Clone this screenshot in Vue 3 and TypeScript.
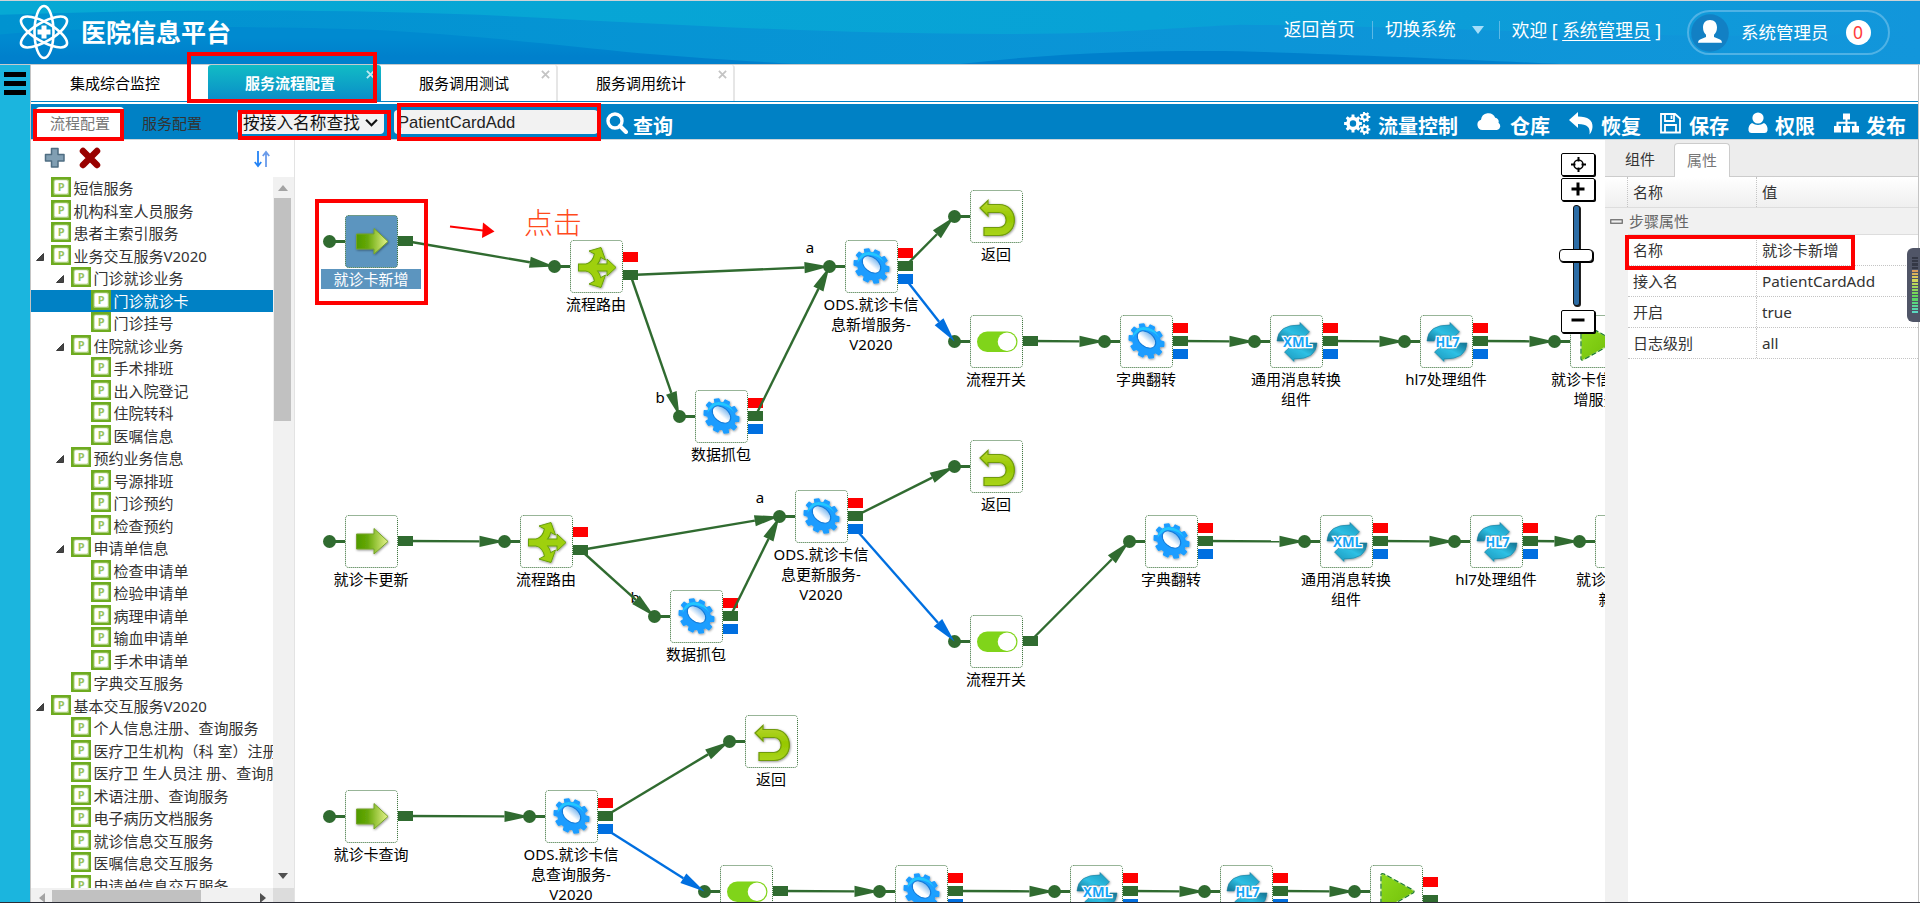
<script setup lang="ts">
type Kind = 'start' | 'router' | 'gear' | 'back' | 'toggle' | 'xml' | 'hl7' | 'play'
interface FlowNode { id: string; kind: Kind; x: number; y: number; lines: string[]; selected?: boolean }
interface Port { dy: number; color: string }
interface Edge { from: string; port: number; to: string; color?: string }
interface TreeRow { text: string; level: number; open?: boolean; selected?: boolean }

const GREEN = '#306b30'
const RED = '#fe0000'
const BLUE = '#006fe0'

const navTabs = [
  { text: '集成综合监控', cls: 'home', closable: false },
  { text: '服务流程配置', cls: 'active', closable: true },
  { text: '服务调用测试', cls: '', closable: true },
  { text: '服务调用统计', cls: '', closable: true },
]

const actions = [
  { icon: 'gears', text: '流量控制' },
  { icon: 'cloud', text: '仓库' },
  { icon: 'undo', text: '恢复' },
  { icon: 'save', text: '保存' },
  { icon: 'user', text: '权限' },
  { icon: 'sitemap', text: '发布' },
]

const tree: TreeRow[] = [
  { text: '短信服务', level: 0 },
  { text: '机构科室人员服务', level: 0 },
  { text: '患者主索引服务', level: 0 },
  { text: '业务交互服务V2020', level: 0, open: true },
  { text: '门诊就诊业务', level: 1, open: true },
  { text: '门诊就诊卡', level: 2, selected: true },
  { text: '门诊挂号', level: 2 },
  { text: '住院就诊业务', level: 1, open: true },
  { text: '手术排班', level: 2 },
  { text: '出入院登记', level: 2 },
  { text: '住院转科', level: 2 },
  { text: '医嘱信息', level: 2 },
  { text: '预约业务信息', level: 1, open: true },
  { text: '号源排班', level: 2 },
  { text: '门诊预约', level: 2 },
  { text: '检查预约', level: 2 },
  { text: '申请单信息', level: 1, open: true },
  { text: '检查申请单', level: 2 },
  { text: '检验申请单', level: 2 },
  { text: '病理申请单', level: 2 },
  { text: '输血申请单', level: 2 },
  { text: '手术申请单', level: 2 },
  { text: '字典交互服务', level: 1 },
  { text: '基本交互服务V2020', level: 0, open: true },
  { text: '个人信息注册、查询服务', level: 1 },
  { text: '医疗卫生机构（科 室）注册、查询服务', level: 1 },
  { text: '医疗卫 生人员注 册、查询服务', level: 1 },
  { text: '术语注册、查询服务', level: 1 },
  { text: '电子病历文档服务', level: 1 },
  { text: '就诊信息交互服务', level: 1 },
  { text: '医嘱信息交互服务', level: 1 },
  { text: '申请单信息交互服务', level: 1 },
]

const nodes: FlowNode[] = [
  { id: 'a1', kind: 'start', x: 345, y: 215, lines: ['就诊卡新增'], selected: true },
  { id: 'a2', kind: 'router', x: 570, y: 240, lines: ['流程路由'] },
  { id: 'a3', kind: 'gear', x: 695, y: 390, lines: ['数据抓包'] },
  { id: 'a4', kind: 'gear', x: 845, y: 240, lines: ['ODS.就诊卡信', '息新增服务-', 'V2020'] },
  { id: 'a5', kind: 'back', x: 970, y: 190, lines: ['返回'] },
  { id: 'a6', kind: 'toggle', x: 970, y: 315, lines: ['流程开关'] },
  { id: 'a7', kind: 'gear', x: 1120, y: 315, lines: ['字典翻转'] },
  { id: 'a8', kind: 'xml', x: 1270, y: 315, lines: ['通用消息转换', '组件'] },
  { id: 'a9', kind: 'hl7', x: 1420, y: 315, lines: ['hl7处理组件'] },
  { id: 'a10', kind: 'play', x: 1570, y: 315, lines: ['就诊卡信息新', '增服务'] },
  { id: 'b1', kind: 'start', x: 345, y: 515, lines: ['就诊卡更新'] },
  { id: 'b2', kind: 'router', x: 520, y: 515, lines: ['流程路由'] },
  { id: 'b3', kind: 'gear', x: 670, y: 590, lines: ['数据抓包'] },
  { id: 'b4', kind: 'gear', x: 795, y: 490, lines: ['ODS.就诊卡信', '息更新服务-', 'V2020'] },
  { id: 'b5', kind: 'back', x: 970, y: 440, lines: ['返回'] },
  { id: 'b6', kind: 'toggle', x: 970, y: 615, lines: ['流程开关'] },
  { id: 'b7', kind: 'gear', x: 1145, y: 515, lines: ['字典翻转'] },
  { id: 'b8', kind: 'xml', x: 1320, y: 515, lines: ['通用消息转换', '组件'] },
  { id: 'b9', kind: 'hl7', x: 1470, y: 515, lines: ['hl7处理组件'] },
  { id: 'b10', kind: 'play', x: 1595, y: 515, lines: ['就诊卡信息更', '新服务'] },
  { id: 'c1', kind: 'start', x: 345, y: 790, lines: ['就诊卡查询'] },
  { id: 'c2', kind: 'gear', x: 545, y: 790, lines: ['ODS.就诊卡信', '息查询服务-', 'V2020'] },
  { id: 'c3', kind: 'back', x: 745, y: 715, lines: ['返回'] },
  { id: 'c4', kind: 'toggle', x: 720, y: 865, lines: [] },
  { id: 'c5', kind: 'gear', x: 895, y: 865, lines: [] },
  { id: 'c6', kind: 'xml', x: 1070, y: 865, lines: [] },
  { id: 'c7', kind: 'hl7', x: 1220, y: 865, lines: [] },
  { id: 'c8', kind: 'play', x: 1370, y: 865, lines: [] },
]

const edges: Edge[] = [
  { from: 'a1', port: 0, to: 'a2' },
  { from: 'a2', port: 1, to: 'a4' },
  { from: 'a2', port: 1, to: 'a3' },
  { from: 'a3', port: 1, to: 'a4' },
  { from: 'a4', port: 1, to: 'a5' },
  { from: 'a4', port: 2, to: 'a6', color: BLUE },
  { from: 'a6', port: 0, to: 'a7' },
  { from: 'a7', port: 1, to: 'a8' },
  { from: 'a8', port: 1, to: 'a9' },
  { from: 'a9', port: 1, to: 'a10' },
  { from: 'b1', port: 0, to: 'b2' },
  { from: 'b2', port: 1, to: 'b4' },
  { from: 'b2', port: 1, to: 'b3' },
  { from: 'b3', port: 1, to: 'b4' },
  { from: 'b4', port: 1, to: 'b5' },
  { from: 'b4', port: 2, to: 'b6', color: BLUE },
  { from: 'b6', port: 0, to: 'b7' },
  { from: 'b7', port: 1, to: 'b8' },
  { from: 'b8', port: 1, to: 'b9' },
  { from: 'b9', port: 1, to: 'b10' },
  { from: 'c1', port: 0, to: 'c2' },
  { from: 'c2', port: 1, to: 'c3' },
  { from: 'c2', port: 2, to: 'c4', color: BLUE },
  { from: 'c4', port: 0, to: 'c5' },
  { from: 'c5', port: 1, to: 'c6' },
  { from: 'c6', port: 1, to: 'c7' },
  { from: 'c7', port: 1, to: 'c8' },
]

const edgeLabels = [
  { t: 'a', x: 810, y: 253 },
  { t: 'b', x: 660, y: 403 },
  { t: 'a', x: 760, y: 503 },
  { t: 'b', x: 635, y: 603 },
]

const props = [
  { k: '名称', v: '就诊卡新增' },
  { k: '接入名', v: 'PatientCardAdd' },
  { k: '开启', v: 'true' },
  { k: '日志级别', v: 'all' },
]

function ports(kind: Kind): Port[] {
  if (kind === 'back') return []
  if (kind === 'start' || kind === 'toggle') return [{ dy: 21, color: GREEN }]
  if (kind === 'router' || kind === 'play') return [{ dy: 12, color: RED }, { dy: 30, color: GREEN }]
  return [{ dy: 8, color: RED }, { dy: 21, color: GREEN }, { dy: 34, color: BLUE }]
}

const wires = edges.map((e) => {
  const a = nodes.find((n) => n.id === e.from)!
  const b = nodes.find((n) => n.id === e.to)!
  const x1 = a.x + 60.5
  const y1 = a.y + ports(a.kind)[e.port].dy + 5
  const x2 = b.x - 15.5
  const y2 = b.y + 26.5
  const len = Math.hypot(x2 - x1, y2 - y1)
  const ux = (x2 - x1) / len
  const uy = (y2 - y1) / len
  const bx = x2 - ux * 25
  const by = y2 - uy * 25
  const head = `${x2},${y2} ${bx - uy * 5.6},${by + ux * 5.6} ${bx + uy * 5.6},${by - ux * 5.6}`
  return { x1, y1, x2: bx, y2: by, head, color: e.color ?? GREEN }
})

/* Cog outline: teeth alternate between an inner and an outer radius. */
function cog(cx: number, cy: number, outer: number, inner: number, teeth: number): string {
  const pts: string[] = []
  const step = (Math.PI * 2) / teeth
  for (let i = 0; i < teeth; i++) {
    const a = i * step
    const corners: [number, number][] = [[-0.3, inner], [-0.2, outer], [0.2, outer], [0.3, inner]]
    for (const [f, r] of corners) {
      pts.push(`${(cx + Math.cos(a + f * step) * r).toFixed(2)},${(cy + Math.sin(a + f * step) * r).toFixed(2)}`)
    }
  }
  return `M${pts.join('L')}Z`
}
function hole(cx: number, cy: number, r: number): string {
  return `M${cx - r},${cy}a${r},${r} 0 1 0 ${2 * r},0a${r},${r} 0 1 0 ${-2 * r},0Z`
}
const bigCog = cog(0, 0, 17, 13.6, 10)
const gears = cog(9, 11.5, 9, 6.8, 8) + hole(9, 11.5, 3.2) + cog(21, 5, 5.4, 4, 7) + hole(21, 5, 1.7) + cog(21, 17.5, 5.4, 4, 7) + hole(21, 17.5, 1.7)
const meter = Array.from({ length: 18 }, (_, i) => {
  if (i < 4) return '#343846'
  const hue = 32 + (i - 4) * 10.5
  return `hsl(${hue}, 62%, 60%)`
})
</script>

<template>
  <div class="page">
    <header class="top">
      <svg class="waves" viewBox="0 0 1920 64" preserveAspectRatio="none">
        <defs>
          <linearGradient id="w0" x1="0" x2="1" y1="0" y2="0">
            <stop offset="0" stop-color="#0093d0" /><stop offset="1" stop-color="#1296db" />
          </linearGradient>
          <linearGradient id="w1" x1="0" x2="1" y1="0" y2="0">
            <stop offset="0" stop-color="#06a9d4" /><stop offset=".6" stop-color="#08a2d6" /><stop offset="1" stop-color="#1296db" />
          </linearGradient>
          <linearGradient id="w2" x1="0" x2="0" y1="0" y2="1">
            <stop offset="0.300" stop-color="#008ad0" /><stop offset=".8" stop-color="#0080cc" />
          </linearGradient>
        </defs>
        <rect width="1920" height="64" fill="url(#w0)" />
        <path d="M0,14 C180,8 360,8 520,16 C700,26 900,36 1060,33 C1140,31 1190,26 1240,24 C1500,26 1700,44 1920,30 V0H0Z" fill="url(#w1)" />
        <path d="M0,34 C100,25 250,25 367,29 C480,35 560,45 640,53 C700,58 760,62 800,64 H0Z" fill="url(#w2)" />
        <path d="M960,64 C1060,52 1160,50 1240,51 C1340,54 1480,60 1560,64Z" fill="#0080cc" />
      </svg>
      <svg class="logo" viewBox="0 0 52 56">
        <g fill="none" stroke="#fff" stroke-width="2.6">
          <ellipse cx="26" cy="28" rx="9.5" ry="26" />
          <ellipse cx="26" cy="28" rx="9.5" ry="26" transform="rotate(60 26 28)" />
          <ellipse cx="26" cy="28" rx="9.5" ry="26" transform="rotate(-60 26 28)" />
        </g>
        <path d="M23.5,21.5h5v4h4v5h-4v4h-5v-4h-4v-5h4z" fill="#fff" />
      </svg>
      <h1>医院信息平台</h1>
      <nav class="links">
        <span class="l1">返回首页</span>
        <i class="sep"></i>
        <span class="l2">切换系统</span>
        <svg class="caret" viewBox="0 0 12 8"><path d="M0,0H12L6,8Z" fill="#a5defa" /></svg>
        <i class="sep s2"></i>
        <span class="hello">欢迎 [ <u>系统管理员</u> ]</span>
      </nav>
      <div class="pill">
        <svg class="avatar" viewBox="0 0 38 38">
          <circle cx="19" cy="19" r="18.8" fill="#1280c4" />
          <path d="M19,6c4.600,0 7,3 7,7.500c0,3.500-1.500,6-3,7.300v2.200l6,2.400q2,1 2,3.400h-24q0-2.400 2-3.400l6-2.400v-2.200c-1.500-1.300-3-3.800-3-7.300c0-4.500 2.400-7.500 7-7.500z" fill="#fff" />
        </svg>
        <span>系统管理员</span>
        <b class="badge">0</b>
      </div>
    </header>

    <div class="body">
      <aside class="rail"><i></i><i></i><i></i></aside>
      <div class="main">
        <div class="tabs">
          <div v-for="t in navTabs" :key="t.text" class="tab" :class="t.cls">
            {{ t.text }}
            <svg v-if="t.closable" class="close" viewBox="0 0 10 10"><path d="M1,1L9,9M9,1L1,9" stroke="currentColor" stroke-width="2" /></svg>
          </div>
        </div>

        <div class="toolbar">
          <span class="sub on">流程配置</span>
          <span class="sub">服务配置</span>
          <div class="select">
            按接入名称查找
            <svg viewBox="0 0 12 8"><path d="M1,1.500L6,6.500L11,1.500" fill="none" stroke="#111" stroke-width="2" /></svg>
          </div>
          <div class="input">PatientCardAdd</div>
          <svg class="find" viewBox="0 0 22 22"><circle cx="9" cy="9" r="7" fill="none" stroke="#fff" stroke-width="3.4" /><path d="M14,14L20,20" stroke="#fff" stroke-width="4" stroke-linecap="round" /></svg>
          <span class="act find-text">查询</span>
          <div class="actions">
            <div v-for="a in actions" :key="a.text" class="action" :class="a.icon">
              <svg v-if="a.icon === 'gears'" width="27" height="23" viewBox="0 0 27 23"><path :d="gears" fill="#fff" fill-rule="evenodd" /></svg>
              <svg v-else-if="a.icon === 'cloud'" width="25" height="23" viewBox="0 0 25 23"><path d="M5.500,18a5.300,5.300 0 0 1-1.500-10.300a7.400,7.400 0 0 1 14.200-1.900a3.800,3.800 0 0 1 3.300,5a4,4 0 0 1-1.500,7.200z" fill="#fff" /></svg>
              <svg v-else-if="a.icon === 'undo'" width="24" height="23" viewBox="0 0 24 23"><path d="M0,8L9,0V4.500C19,4.500 24,8.500 23.500,15C23.300,18 22,20.500 20.500,22.500C21.500,15.500 18.500,12 9,12V16Z" fill="#fff" /></svg>
              <svg v-else-if="a.icon === 'save'" width="21" height="23" viewBox="0 0 21 23"><path d="M1,2H15L20,6.500V20.500H1ZM5,2V9H14V2M11.500,3.500V7M5,20V13H16V20" fill="none" stroke="#fff" stroke-width="1.800" /></svg>
              <svg v-else-if="a.icon === 'user'" width="20" height="23" viewBox="0 0 20 23"><circle cx="10" cy="6" r="5.600" fill="#fff" /><path d="M4,11Q10,15 16,11Q20,13 19.500,18.500Q19,21 16.500,21H3.500Q1,21 .5,18.500Q0,13 4,11Z" fill="#fff" /></svg>
              <svg v-else width="25" height="23" viewBox="0 0 25 23"><path d="M9,1.500h7v6h-7zM0,14h7v6.500h-7zM9,14h7v6.500h-7zM18,14h7v6.500h-7z" fill="#fff" /><path d="M12.500,7V14M3.500,14V10.800H21.500V14" fill="none" stroke="#fff" stroke-width="2" /></svg>
              <span class="act">{{ a.text }}</span>
            </div>
          </div>
        </div>

        <div class="work">
          <section class="side">
            <div class="side-tools">
              <svg width="22" height="22" viewBox="0 0 22 22"><path d="M7.500,1.500h6.500v6h6v6.500h-6v6h-6.500v-6h-6v-6.500h6z" fill="#819fb3" stroke="#4f6e82" stroke-width="1.500" stroke-linejoin="round" /></svg>
              <svg class="del" width="22" height="22" viewBox="0 0 22 22"><path d="M4,4L18,18M18,4L4,18" stroke="#990100" stroke-width="6.500" stroke-linecap="round" /></svg>
              <svg class="sort" width="17" height="18" viewBox="0 0 17 18"><path d="M4,1V15M.8,12L4,16L7.200,12" fill="none" stroke="#2383f5" stroke-width="1.800" /><path d="M12,17V3M8.800,6L12,2L15.200,6" fill="none" stroke="#6a9bea" stroke-width="1.800" /></svg>
            </div>
            <div class="tree-area">
              <div class="tree">
                <div v-for="r in tree" :key="r.text" class="row" :class="['lv' + r.level, { sel: r.selected }]">
                  <span class="toggle"><svg v-if="r.open" width="8" height="8" viewBox="0 0 8 8"><path d="M7.500,.5V7.500H.5Z" fill="#444" stroke="#222" stroke-width=".8" /></svg></span>
                  <svg class="p" viewBox="0 0 20 20">
                    <rect width="20" height="20" fill="#6eab20" />
                    <rect x="2.500" y="2.500" width="15.500" height="15.500" rx="1.500" fill="#a9cd7a" />
                    <rect x="3.500" y="3.300" width="13.300" height="13.500" rx="1.500" fill="#fff" />
                    <text x="10.300" y="13.500" text-anchor="middle" font-size="11" font-weight="700" fill="#97c25f">P</text>
                  </svg>
                  <span class="name">{{ r.text }}</span>
                </div>
              </div>
              <div class="vbar"><svg width="10" height="6" viewBox="0 0 10 6"><path d="M0,6L5,0L10,6Z" fill="#a3a3a3" /></svg><i></i><svg class="dn" width="10" height="6" viewBox="0 0 10 6"><path d="M0,0L5,6L10,0Z" fill="#505050" /></svg></div>
            </div>
            <div class="hbar">
              <svg width="6" height="10" viewBox="0 0 6 10"><path d="M6,0V10L0,5Z" fill="#a3a3a3" /></svg><i></i><svg class="rt" width="6" height="10" viewBox="0 0 6 10"><path d="M0,0V10L6,5Z" fill="#505050" /></svg><b></b>
            </div>
          </section>

          <section class="canvas">
            <svg class="flow" viewBox="295 140 1310 762" width="1310" height="762">
              <defs>
                <linearGradient id="gs" x1="0" x2="1" y1="0" y2="0"><stop offset="0" stop-color="#4f9a00" /><stop offset=".35" stop-color="#66a808" /><stop offset="1" stop-color="#e6f38c" /></linearGradient>
                <linearGradient id="gc" x1="0" x2="1" y1="1" y2="0"><stop offset="0" stop-color="#1b9bff" /><stop offset=".5" stop-color="#1c9dff" /><stop offset="1" stop-color="#1ba4ff" /></linearGradient>
                <linearGradient id="gh" x1="0" x2="0" y1="0" y2="1"><stop offset="0" stop-color="#7fb9ee" /><stop offset=".6" stop-color="#fff" /></linearGradient>
                <linearGradient id="gb" x1="0" x2="0" y1="0" y2="1"><stop offset="0" stop-color="#b7d62e" /><stop offset=".5" stop-color="#96c800" /><stop offset="1" stop-color="#a9d41a" /></linearGradient>
                <linearGradient id="gr" x1="0" x2="1" y1="1" y2="0"><stop offset="0" stop-color="#126f8e" /><stop offset=".45" stop-color="#2ec0e4" /><stop offset="1" stop-color="#1b94b8" /></linearGradient>
                <linearGradient id="gp" x1="0" x2="1" y1="0" y2="1"><stop offset="0" stop-color="#8edb1c" /><stop offset="1" stop-color="#6fbc08" /></linearGradient>
                <filter id="sh" x="-20%" y="-20%" width="150%" height="150%"><feDropShadow dx=".6" dy=".8" stdDeviation="1" flood-opacity=".45" /></filter>
              </defs>
              <g v-for="n in nodes" :key="n.id" :transform="`translate(${n.x} ${n.y})`">
                <path d="M-15,26.500H0" :stroke="GREEN" stroke-width="3" />
                <circle cx="-15.500" cy="26.500" r="6.500" :fill="GREEN" />
                <rect x=".5" y=".5" width="52" height="52" rx="3" :fill="n.selected ? '#5c95bf' : '#fff'" :stroke="GREEN" stroke-width="1" stroke-dasharray="1 1" />
                <rect v-for="p in ports(n.kind)" :key="p.dy" x="53" :y="p.dy" width="15" height="10" :fill="p.color" />

                <path v-if="n.kind === 'start'" d="M11.500,19H29V13.500L43,26.500L29,39V34H11.500Z" fill="url(#gs)" stroke="#76a32c" stroke-width="1" filter="url(#sh)" />
                <g v-else-if="n.kind === 'router'" filter="url(#sh)">
                  <g fill="none" stroke="#689f08" stroke-width="8"><path d="M8,27.500H38" /><path d="M17,27.500Q26,25 28,14M17,27.500Q26,30 28,41" /></g>
                  <g fill="#9fd010" stroke="#689f08" stroke-width="1"><path d="M37,19L46,27.500L37,36Z" /><path d="M19,11L31,7.500L35.500,20Z" /><path d="M19,44L31,47.500L35.500,35Z" /></g>
                  <g fill="none" stroke="#9fd010" stroke-width="6"><path d="M9,27.500H39" /><path d="M17,27.500Q26,25 28,14M17,27.500Q26,30 28,41" /></g>
                </g>
                <g v-else-if="n.kind === 'gear'" transform="translate(26.500 26)" filter="url(#sh)">
                  <path :d="bigCog" transform="rotate(42) scale(1.080 .93)" fill="url(#gc)" stroke="#1c9dff" stroke-width="1.600" stroke-linejoin="round" />
                  <path d="M-14,-3Q-13,-13 -3,-14Q8,-14 13,-3Q8,-10 -1,-11Q-9,-11 -14,-3Z" fill="#22ccff" opacity=".85" />
                  <ellipse rx="10.500" ry="7" transform="translate(0 -1.500) rotate(40)" fill="url(#gh)" stroke="#1279d6" stroke-width="1" />
                </g>
                <path v-else-if="n.kind === 'back'" d="M10,18L18,10.500V14.500H29C49.500,14.500 49.500,45.500 29,45.500H14V37.500H29C38.500,37.500 38.500,22.500 29,22.500H18V26Z" fill="url(#gb)" stroke="#6f9a08" stroke-width="1.200" filter="url(#sh)" />
                <g v-else-if="n.kind === 'toggle'"><rect x="7" y="16.500" width="40.500" height="20.500" rx="10.250" fill="#80d41a" /><circle cx="37" cy="26.750" r="9.300" fill="#fff" /></g>
                <g v-else-if="n.kind === 'play'">
                  <path d="M11,10Q11,8 14,9L43,25Q45,26.500 43,28L14,44.500Q11,46 11,43.500Z" fill="url(#gp)" stroke="#cfeaa5" stroke-width="1.200" />
                  <path d="M11,10Q11,8 14,9L43,25Q45,26.500 43,28L14,44.500Q11,46 11,43.500Z" fill="none" stroke="#1d7a35" stroke-width="1.200" stroke-dasharray="5 2.500" />
                </g>
                <g v-else>
                  <g fill="url(#gr)" stroke="#1a7c9c" stroke-width=".6" filter="url(#sh)">
                    <path d="M7,26Q8,9.500 30,10V7.500L39.500,17L30,25.500V20.500Q17,18.500 14,26Z" />
                    <path d="M7,26Q8,9.500 30,10V7.500L39.500,17L30,25.500V20.500Q17,18.500 14,26Z" transform="rotate(180 27 27)" />
                  </g>
                  <text x="27.500" y="32" class="badge-text" text-anchor="middle" :textLength="n.kind === 'xml' ? 29 : 24" lengthAdjust="spacingAndGlyphs">{{ n.kind === 'xml' ? 'XML' : 'HL7' }}</text>
                </g>

                <rect v-if="n.selected" x="-24" y="54" width="100" height="20" fill="#5c95bf" />
                <text v-for="(l, i) in n.lines" :key="l" x="26" :y="69.500 + i * 20" text-anchor="middle" class="cap" :class="{ inv: n.selected }">{{ l }}</text>
              </g>
              <text v-for="e in edgeLabels" :key="e.x" :x="e.x" :y="e.y" text-anchor="middle" class="cap">{{ e.t }}</text>
              <g v-for="(w, i) in wires" :key="i">
                <line :x1="w.x1" :y1="w.y1" :x2="w.x2" :y2="w.y2" :stroke="w.color" stroke-width="2.400" />
                <polygon :points="w.head" :fill="w.color" />
              </g>
              <path d="M450,226.500L483,230.500" stroke="#fe0000" stroke-width="2" /><path d="M483,222.500L494.500,231.500L482,238Z" fill="#fe0000" />
              <text x="524" y="234" class="hint">点击</text>
            </svg>
            <div class="zoomer">
              <span class="zb"><svg width="15" height="15" viewBox="0 0 15 15"><circle cx="7.500" cy="7.500" r="4.500" fill="none" stroke="#000" stroke-width="1.500" /><path d="M7.500,0V4.500M7.500,10.500V15M0,7.500H4.500M10.500,7.500H15" stroke="#000" stroke-width="2" /></svg></span>
              <span class="zb"><svg width="14" height="14" viewBox="0 0 14 14"><path d="M7,.5V13.500M.5,7H13.500" stroke="#000" stroke-width="3" /></svg></span>
              <span class="track"><i></i></span>
              <span class="zb"><svg width="14" height="14" viewBox="0 0 14 14"><path d="M.5,6H13.500" stroke="#000" stroke-width="3" /></svg></span>
            </div>
          </section>

          <section class="panel">
            <div class="ptabs"><span>组件</span><span class="on">属性</span></div>
            <div class="grid-head"><i></i><span class="k">名称</span><span class="v">值</span></div>
            <div class="group"><svg width="13" height="5" viewBox="0 0 13 5"><rect x=".75" y=".75" width="11.500" height="3.500" fill="#eee" stroke="#666" stroke-width="1.200" /></svg>步骤属性</div>
            <div class="grid">
              <div v-for="p in props" :key="p.k" class="prow"><span class="k">{{ p.k }}</span><span class="v">{{ p.v }}</span></div>
            </div>
          </section>
        </div>
      </div>
    </div>

    <div class="mark m-tab"></div>
    <div class="mark m-sub"></div>
    <div class="mark m-select"></div>
    <div class="mark m-input"></div>
    <div class="mark m-node"></div>
    <div class="mark m-prop"></div>
    <div class="meter"><i v-for="(c, i) in meter" :key="i" :style="{ background: c }"></i></div>
  </div>
</template>

<style>
body { margin: 0; overflow: hidden; }
</style>

<style scoped>
* { box-sizing: border-box; }
svg { display: block; flex: none; }
.page { position: relative; width: 1920px; height: 903px; overflow: hidden; display: flex; flex-direction: column; background: #fff; color: #333; font: 15px "Noto Sans", "Noto Sans CJK SC", sans-serif; border-bottom: 1px solid #2b2c35; white-space: nowrap; }
.top { position: relative; height: 65px; flex: none; display: flex; align-items: flex-start; color: #fff; border-top: 1px solid #cfd3d6; border-bottom: 1px solid #c6cacd; font-size: 17.5px; }
.waves { position: absolute; inset: 0; width: 100%; height: 100%; }
.logo { position: relative; width: 52px; height: 56px; margin: 3px 0 0 18px; }
h1 { position: relative; margin: 13px 0 0 11px; font-size: 25px; line-height: 36px; font-weight: 700; }
.links { position: relative; display: flex; margin-left: auto; height: 60px; }
.links span { line-height: 30px; margin-top: 13px; }
.links .l1 { font-size: 17.800px; }
.sep { width: 1px; height: 18px; margin: 20px 12px 0 17px; background: #5cb9e6; }
.links .l2 { font-size: 17.700px; }
.caret { width: 12px; height: 8px; margin: 25px 0 0 16px; }
.sep.s2 { margin: 20px 12px 0 15px; }
.links .hello { margin-top: 14px; font-size: 17.700px; }
u { text-underline-offset: 3px; text-decoration-thickness: 1px; }
.pill { position: relative; display: flex; align-items: center; width: 203px; height: 45px; margin: 9px 30px 0 26px; padding-left: 2px; border: 2px solid #4fb2e5; border-radius: 23px; }
.pill span { margin-top: -3px; }
.avatar { width: 38px; height: 38px; margin-right: 12px; }
.badge { width: 25px; height: 25px; margin-left: 17px; border-radius: 50%; background: #fff; color: #ff3b3b; font-weight: 400; line-height: 25px; text-align: center; }
.body { flex: 1; display: flex; min-height: 0; }
.rail { width: 30px; background: #1bb5de; padding: 7px 4px; display: flex; flex-direction: column; gap: 4px; }
.rail i { height: 5px; background: #000; }
.main { flex: 1; min-width: 0; display: flex; flex-direction: column; border-left: 1px solid #c4c4c4; border-right: 1px solid #c4c4c4; margin-right: 1px; }
.tabs { display: flex; height: 37px; border-bottom: 1px solid #0081c5; color: #000; }
.tab { position: relative; width: 177px; border-right: 2px solid #e6e6e6; line-height: 37px; text-align: center; border-radius: 0 3px 0 0; padding-right: 9px; }
.tab.home { border: 0; padding: 0 0 0 39px; text-align: left; }
.tab.active { width: 173px; border: 0; background: linear-gradient(#11bcc5, #0a8cc8); color: #fff; font-weight: 700; border-radius: 3px 3px 0 0; padding-right: 9px; }
.close { position: absolute; right: 6px; top: 5px; width: 9px; height: 9px; color: #c4c4c4; }
.active .close { right: 6px; color: #bfe9f2; }
.toolbar { display: flex; align-items: flex-start; height: 38px; border-top: 2px solid #fff; border-bottom: 1px solid #cdd5d9; background: #0081c5; flex: none; }
.sub { margin: 3px 0 0 18px; height: 32px; line-height: 32px; }
.sub.on { margin-left: 5px; width: 88px; background: #fff; border-radius: 4px 4px 0 0; color: #777; text-align: center; }
.select { margin: 6px 0 0 35px; width: 147px; height: 24px; padding-left: 6px; border-radius: 4px; background: #f2f2f2; color: #111; font-size: 16.700px; line-height: 23px; display: flex; align-items: center; }
.select svg { width: 13px; height: 9px; margin-left: 5px; }
.input { margin: 6px 0 0 10px; width: 204px; height: 24px; padding-left: 4px; border-radius: 4px; background: #f2f2f2; color: #222; font: 16.600px/25px "Liberation Sans", sans-serif; }
.find { width: 22px; height: 22px; margin: 8px 0 0 8px; }
.act { font-size: 20px; font-weight: 700; color: #fff; line-height: 26px; }
.find-text { margin: 10px 0 0 5px; }
.actions { display: flex; margin-left: auto; padding-right: 12px; gap: 19px; }
.action { display: flex; gap: 8px; margin-top: 8px; }
.action .act { margin-top: 2px; }
.action.gears, .action.sitemap, .action.user { gap: 7px; }
.work { flex: 1; display: flex; min-height: 0; }
.side { width: 264px; display: flex; flex-direction: column; border-right: 1px solid #e3e3e3; }
.side-tools { display: flex; height: 37px; flex: none; padding: 7px 0 0 13px; }
.del { margin-left: 13px; }
.sort { margin: 3px 0 0 153px; }
.tree-area { flex: 1; min-height: 0; display: flex; }
.hbar { flex: none; }
.tree-area .tree { width: 242px; overflow: hidden; }
.row { display: flex; height: 22.500px; line-height: 22px; }
.row.lv1 { padding-left: 20px; }
.row.lv2 { padding-left: 40px; }
.row.sel { background: #0081c5; color: #fff; }
.toggle { width: 20px; flex: none; padding: 8px 0 0 5px; }
.p { width: 20px; height: 20px; margin-right: 2.500px; font-family: "Open Sans", sans-serif; }
.vbar { width: 21px; background: #f1f1f1; display: flex; flex-direction: column; align-items: center; padding: 8px 2px 9px 0; }
.vbar i { width: 17px; height: 223px; margin-top: 7px; background: #c1c1c1; }
.dn { margin-top: auto; }
.hbar { position: relative; height: 14px; background: #f1f1f1; display: flex; overflow: hidden; padding: 2px 0 0 8px; }
.hbar svg { margin-top: 3px; }
.hbar i { width: 149px; height: 12px; margin-left: 7px; background: #c1c1c1; }
.hbar .rt { margin-left: 59px; }
.hbar b { width: 21px; height: 14px; margin: -2px 0 0 auto; background: #dcdcdc; }
.canvas { position: relative; width: 1310px; flex: none; overflow: hidden; background: #fff; }
.cap { font-size: 15px; fill: #000; }
.cap.inv { fill: #fff; }
.badge-text { font: 700 15px "Open Sans", sans-serif; fill: #16a5f6; stroke: #fff; stroke-width: 2.500px; paint-order: stroke; }
.hint { font-family: "Noto Sans CJK SC", sans-serif; font-weight: 300; font-size: 29px; fill: #ff4a1c; }
.zoomer { position: absolute; left: 1264px; top: 13px; display: flex; flex-direction: column; align-items: center; width: 38px; }
.zb { width: 34px; height: 23px; margin-bottom: 2px; background: #fff; border: 1.500px solid #000; border-radius: 2px; box-shadow: 1px 1px 0 #000; display: flex; justify-content: center; padding-top: 3px; }
.track { position: relative; width: 7px; height: 101px; margin: 2px 4px 4px 0; border: 1.500px solid #111; border-radius: 3px; background: #2c6ca5; box-shadow: 1px 1px 0 #222; }
.track i { position: absolute; left: -15px; top: 43px; width: 34px; height: 13px; background: #fff; border: 1.500px solid #000; border-radius: 4px; box-shadow: 1px 1px 0 #000; }
.panel { flex: 1; display: flex; flex-direction: column; background: #f1f1f1; }
.ptabs { display: flex; height: 37px; padding-left: 20px; background: #ededed; border-bottom: 1px solid #ccc; line-height: 39px; }
.ptabs .on { width: 56px; height: 34px; margin: 3px 0 0 19px; background: #fff; border: 1px solid #ccc; border-bottom: 0; border-radius: 4px 4px 0 0; text-align: center; line-height: 32px; color: #777; }
.grid-head { display: flex; height: 31px; line-height: 31px; background: linear-gradient(#fff, #efefef); border-bottom: 1px solid #ddd; }
.grid-head i { width: 22px; }
.k { width: 130px; border-left: 1px dotted #c4c4c4; border-right: 1px dotted #c4c4c4; padding-left: 5px; }
.v { padding-left: 5px; font-size: 15.300px; }
.group { display: flex; align-items: center; gap: 6px; height: 26px; padding-left: 5px; line-height: 24px; color: #666; }
.grid { flex: 1; margin-left: 23px; background: #fff; border-top: 1px solid #ddd; }
.prow { display: flex; height: 31px; line-height: 31px; border-bottom: 1px dotted #c4c4c4; }
.prow .k { width: 129px; border-left: 0; padding-left: 5px; }
.mark { position: absolute; border: 4px solid #fe0000; }
.m-tab { left: 187px; top: 52px; width: 190px; height: 51px; }
.m-sub { left: 33px; top: 109px; width: 91px; height: 32px; }
.m-select { left: 238px; top: 110px; width: 153px; height: 30px; }
.m-input { left: 397px; top: 103px; width: 204px; height: 38px; }
.m-node { left: 315px; top: 199px; width: 113px; height: 106px; }
.m-prop { left: 1625px; top: 235px; width: 230px; height: 35px; }
.meter { position: absolute; left: 1907px; top: 248px; width: 13px; height: 74px; padding: 9px 2px 0 5px; background: #505567; border-radius: 6px 0 0 6px; display: flex; flex-direction: column; gap: 1px; }
.meter i { height: 2.200px; flex: none; }
</style>
